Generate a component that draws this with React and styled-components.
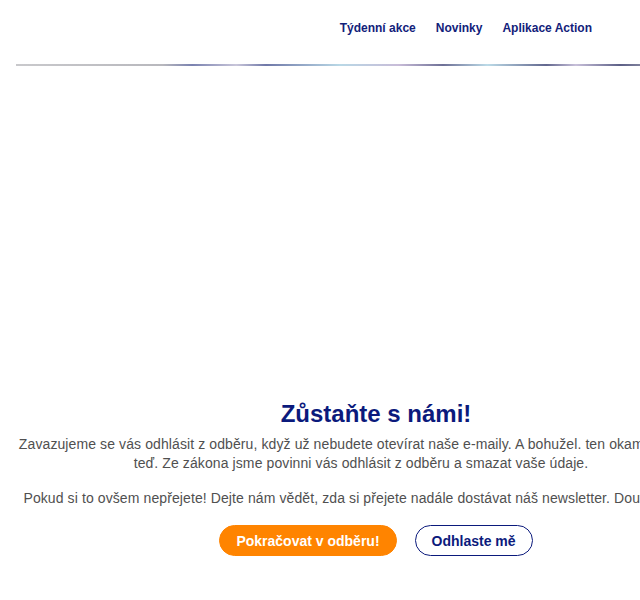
import React from 'react';
import styled, { createGlobalStyle } from 'styled-components';

const GlobalStyle = createGlobalStyle`
  html, body {
    margin: 0;
    padding: 0;
    background: #fff;
    overflow-x: hidden;
  }
  body {
    font-family: 'Liberation Sans', Arial, sans-serif;
  }
`;

const Page = styled.div`
  width: 752px;
  min-height: 600px;
  display: flex;
  flex-direction: column;
`;

const Header = styled.header`
  height: 64px;
  margin-left: 16px;
  display: flex;
  align-items: center;
  justify-content: flex-end;
  padding-right: 160px;
  border-bottom: 2px solid transparent;
  border-image: linear-gradient(
      90deg,
      #c9c9cc 0%,
      #b8b8bd 20%,
      #7a82b0 24%,
      #c9c6da 30%,
      #6f78a8 34%,
      #b9d8e6 44%,
      #c8bcd8 52%,
      #6e7096 58%,
      #bcdbe8 64%,
      #62678e 72%,
      #c8c0da 76%,
      #5c5f86 82%,
      #c4c4c8 90%,
      #d8dce4 100%
    )
    1;
`;

const Nav = styled.nav`
  display: flex;
  gap: 20px;
  margin-top: -9px;
`;

const NavLink = styled.a`
  color: #12217a;
  font-size: 12px;
  font-weight: 700;
  text-decoration: none;
`;

const Hero = styled.div`
  height: 333px;
`;

const Content = styled.section`
  display: flex;
  flex-direction: column;
  align-items: center;
`;

const Title = styled.h1`
  margin: 0 0 6px;
  color: #0b1a7c;
  font-size: 24px;
  font-weight: 700;
  line-height: 30px;
`;

const Text = styled.div`
  align-self: flex-start;
  margin-left: 11px;
  width: 700px;
  text-align: center;
  color: #505050;
  font-size: 14px;
  line-height: 19px;
  letter-spacing: 0.1px;
`;

const Para = styled.p`
  margin: 0 0 16px;
  white-space: ${(p) => (p.$nowrap ? 'nowrap' : 'normal')};
`;

const Actions = styled.div`
  display: flex;
  gap: 18px;
  margin-top: 1px;
`;

const Button = styled.button`
  height: 31px;
  padding: 0 16px;
  border-radius: 16px;
  font-family: 'Liberation Sans', Arial, sans-serif;
  font-size: 14px;
  font-weight: 700;
  cursor: pointer;
  border: 1px solid ${(p) => (p.$primary ? '#ff8400' : '#0b1a7c')};
  background: ${(p) => (p.$primary ? '#ff8400' : '#fff')};
  color: ${(p) => (p.$primary ? '#fff' : '#0b1a7c')};
`;

export default function App() {
  return (
    <Page>
      <GlobalStyle />
      <Header>
        <Nav>
          <NavLink href="#">Týdenní akce</NavLink>
          <NavLink href="#">Novinky</NavLink>
          <NavLink href="#">Aplikace Action</NavLink>
        </Nav>
      </Header>
      <Hero />
      <Content>
        <Title>Zůstaňte s námi!</Title>
        <Text>
          <Para>
            Zavazujeme se vás odhlásit z odběru, když už nebudete otevírat naše e-maily. A bohužel. ten okamžik nastal
            teď. Ze zákona jsme povinni vás odhlásit z odběru a smazat vaše údaje.
          </Para>
          <Para $nowrap>
            Pokud si to ovšem nepřejete! Dejte nám vědět, zda si přejete nadále dostávat náš newsletter. Doufáme v to
          </Para>
        </Text>
        <Actions>
          <Button $primary>Pokračovat v odběru!</Button>
          <Button>Odhlaste mě</Button>
        </Actions>
      </Content>
    </Page>
  );
}
